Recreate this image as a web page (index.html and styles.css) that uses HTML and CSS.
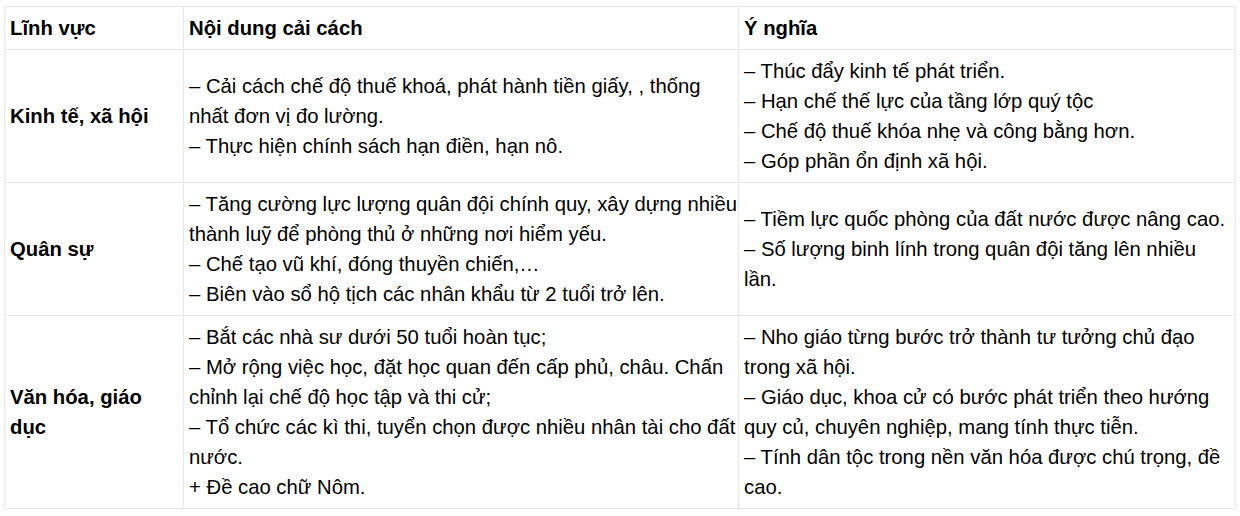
FILE: index.html
```html
<!DOCTYPE html>
<html lang="vi">
<head>
<meta charset="utf-8">
<link rel="stylesheet" href="styles.css">
</head>
<body>
<table class="reform">
  <colgroup>
    <col class="c1">
    <col class="c2">
    <col class="c3">
  </colgroup>
  <thead>
    <tr>
      <th>Lĩnh vực</th>
      <th>Nội dung cải cách</th>
      <th>Ý nghĩa</th>
    </tr>
  </thead>
  <tbody>
    <tr>
      <th>Kinh tế, xã hội</th>
      <td class="content">– Cải cách chế độ thuế khoá, phát hành tiền giấy, , thống nhất đơn vị đo lường.<br>– Thực hiện chính sách hạn điền, hạn nô.</td>
      <td>– Thúc đẩy kinh tế phát triển.<br>– Hạn chế thế lực của tầng lớp quý tộc<br>– Chế độ thuế khóa nhẹ và công bằng hơn.<br>– Góp phần ổn định xã hội.</td>
    </tr>
    <tr>
      <th>Quân sự</th>
      <td class="content">– Tăng cường lực lượng quân đội chính quy, xây dựng nhiều thành luỹ để phòng thủ ở những nơi hiểm yếu.<br>– Chế tạo vũ khí, đóng thuyền chiến,…<br>– Biên vào sổ hộ tịch các nhân khẩu từ 2 tuổi trở lên.</td>
      <td>– Tiềm lực quốc phòng của đất nước được nâng cao.<br>– Số lượng binh lính trong quân đội tăng lên nhiều lần.</td>
    </tr>
    <tr>
      <th>Văn hóa, giáo dục</th>
      <td class="content">– Bắt các nhà sư dưới 50 tuổi hoàn tục;<br>– Mở rộng việc học, đặt học quan đến cấp phủ, châu. Chấn chỉnh lại chế độ học tập và thi cử;<br>– Tổ chức các kì thi, tuyển chọn được nhiều nhân tài cho đất nước.<br>+ Đề cao chữ Nôm.</td>
      <td>– Nho giáo từng bước trở thành tư tưởng chủ đạo trong xã hội.<br>– Giáo dục, khoa cử có bước phát triển theo hướng quy củ, chuyên nghiệp, mang tính thực tiễn.<br>– Tính dân tộc trong nền văn hóa được chú trọng, đề cao.</td>
    </tr>
  </tbody>
</table>
</body>
</html>
```
FILE: styles.css
```css
html, body {
  margin: 0;
  padding: 0;
  background: #ffffff;
}
body {
  padding: 6px 5px 0 4px;
  font-family: "Liberation Sans", Arial, sans-serif;
  font-size: 20.3px;
  line-height: 30px;
  color: #000;
}
.reform {
  width: 1231px;
  border-collapse: collapse;
  table-layout: fixed;
}
.reform .c1 { width: 179px; }
.reform .c2 { width: 555px; }
.reform .c3 { width: 497px; }
.reform th,
.reform td {
  border: 1px solid #e8e8e8;
  padding: 6px 5px;
  vertical-align: middle;
  text-align: left;
}
.reform th {
  font-weight: bold;
}
.reform td {
  font-weight: normal;
}
.reform td.content {
  padding-right: 0;
}
```
